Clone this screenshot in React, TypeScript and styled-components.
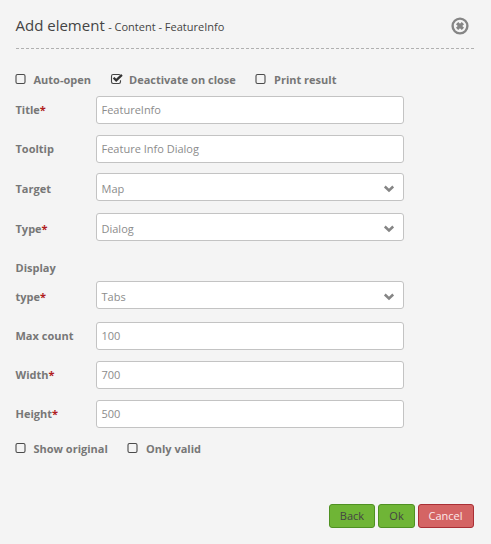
import React from "react";
import styled, { createGlobalStyle } from "styled-components";

const GlobalStyle = createGlobalStyle`
  body {
    margin: 0;
    background: #f4f4f4;
    font-family: "Open Sans", "Noto Sans", sans-serif;
    font-size: 11px;
    color: #777;
  }
`;

const Dialog = styled.div`
  box-sizing: border-box;
  width: 491px;
  height: 544px;
  padding: 0 17px 16px 15.5px;
  display: flex;
  flex-direction: column;
  background: #f4f4f4;
`;

const Header = styled.header`
  box-sizing: border-box;
  flex: none;
  height: 49px;
  padding: 4px 5px 0 0;
  display: flex;
  align-items: center;
  justify-content: space-between;
  border-bottom: 1px dashed #b0b0b0;
`;

const Heading = styled.h1`
  margin: 0;
  font-size: 15px;
  font-weight: 400;
  line-height: 22px;
  color: #444;
`;

const SubHeading = styled.span`
  margin-left: -0.5px;
  font-size: 11px;
`;

const CloseButton = styled.button`
  width: 18px;
  height: 18px;
  padding: 0;
  border: 0;
  background: none;
  svg {
    display: block;
  }
`;

const CheckRow = styled.div<{ $top: number }>`
  flex: none;
  display: flex;
  height: 16px;
  margin-top: ${(p) => p.$top}px;
`;

const CheckLabel = styled.label<{ $width: number }>`
  display: flex;
  width: ${(p) => p.$width}px;
  font-weight: 700;
  line-height: 16px;
  white-space: nowrap;
  svg {
    flex: none;
    margin: 1px 4.5px 0 -0.5px;
  }
  label + & svg {
    margin: 1px 5.1px 0 -1.1px;
  }
`;

const FieldRow = styled.div<{ $top: number }>`
  flex: none;
  display: flex;
  align-items: flex-end;
  margin-top: ${(p) => p.$top}px;
  height: 28px;
`;

const FieldLabel = styled.label<{ $drop: number }>`
  width: 80.5px;
  font-weight: 700;
  line-height: 29px;
  margin-bottom: ${(p) => -p.$drop}px;
`;

const Required = styled.span`
  color: #b01c20;
`;

const Control = styled.div<{ $drop: number }>`
  box-sizing: border-box;
  width: 308px;
  height: 28px;
  padding: ${(p) => p.$drop}px 8px 0 4.5px;
  display: flex;
  align-items: flex-start;
  justify-content: space-between;
  border: 1px solid #c3c3c3;
  border-radius: 3px;
  background: #fff;
  color: #8c8c8c;
  line-height: 25px;
  svg {
    margin-top: 9px;
  }
`;

const WrappedLine = styled.div`
  flex: none;
  height: 28px;
  margin-top: 12px;
  font-weight: 700;
  line-height: 29px;
`;

const Actions = styled.footer`
  margin-top: auto;
  display: flex;
  justify-content: flex-end;
  gap: 3px;
`;

const ActionButton = styled.button<{ $width: number; $danger?: boolean }>`
  box-sizing: border-box;
  width: ${(p) => p.$width}px;
  height: 24px;
  padding: 0 ${(p) => (p.$danger ? 1 : 0)}px 0 0;
  border: 1px solid ${(p) => (p.$danger ? "#a92f35" : "#4f9122")};
  border-radius: 3px;
  background: ${(p) => (p.$danger ? "#d46464" : "#6fb536")};
  color: ${(p) => (p.$danger ? "#fbe9e9" : "#444")};
  font: 11px/22px "Open Sans", "Noto Sans", sans-serif;
`;

const CloseIcon = () => (
  <svg width="18" height="18" viewBox="0 0 18 18">
    <circle cx="9" cy="9" r="7.4" fill="none" stroke="#858585" strokeWidth="2.4" />
    <path d="M6.1 6.1 11.9 11.9M11.9 6.1 6.1 11.9" stroke="#858585" strokeWidth="3.2" />
  </svg>
);

const CheckBox = ({ checked }: { checked?: boolean }) => (
  <svg width="14" height="12" viewBox="0 0 14 12">
    {checked ? (
      <>
        <path
          d="M10.5 7.2V8.8Q10.5 10.5 8.9 10.5H3.1Q1.5 10.5 1.5 8.8V3.2Q1.5 1.5 3.1 1.5H8.9L9.9 1.7"
          fill="none"
          stroke="#444"
          strokeWidth="1.1"
        />
        <path d="M3.6 4.8 6.2 7.4 11.9 1.9" fill="none" stroke="#333" strokeWidth="2.3" />
      </>
    ) : (
      <rect x="1" y="1.5" width="9" height="9" rx="1.5" fill="none" stroke="#4a4a4a" strokeWidth="1.1" />
    )}
  </svg>
);

const Chevron = () => (
  <svg width="12" height="8" viewBox="0 0 12 8">
    <path d="M1.8 1.5 6 5.5 10.2 1.5" fill="none" stroke="#858585" strokeWidth="2.5" />
  </svg>
);

type FieldProps = {
  label: string;
  value: string;
  top: number;
  required?: boolean;
  select?: boolean;
};

const Field = ({ label, value, top, required, select }: FieldProps) => {
  const drop = select ? 2 : 0;
  return (
    <FieldRow $top={top}>
      <FieldLabel $drop={drop}>
        {label}
        {required && <Required>*</Required>}
      </FieldLabel>
      <Control $drop={drop}>
        <span>{value}</span>
        {select && <Chevron />}
      </Control>
    </FieldRow>
  );
};

const App = () => (
  <>
    <GlobalStyle />
    <Dialog>
      <Header>
        <Heading>
          Add element <SubHeading>- Content - FeatureInfo</SubHeading>
        </Heading>
        <CloseButton aria-label="Close">
          <CloseIcon />
        </CloseButton>
      </Header>
      <CheckRow $top={23}>
        <CheckLabel $width={95.5}><CheckBox />Auto-open</CheckLabel>
        <CheckLabel $width={145}><CheckBox checked />Deactivate on close</CheckLabel>
        <CheckLabel $width={90}><CheckBox />Print result</CheckLabel>
      </CheckRow>
      <Field label="Title" value="FeatureInfo" top={8} required />
      <Field label="Tooltip" value="Feature Info Dialog" top={11} />
      <Field label="Target" value="Map" top={10} select />
      <Field label="Type" value="Dialog" top={12} required select />
      <WrappedLine>Display</WrappedLine>
      <Field label="type" value="Tabs" top={0} required select />
      <Field label="Max count" value="100" top={13} />
      <Field label="Width" value="700" top={11} required />
      <Field label="Height" value="500" top={11} required />
      <CheckRow $top={13}>
        <CheckLabel $width={112.5}><CheckBox />Show original</CheckLabel>
        <CheckLabel $width={90}><CheckBox />Only valid</CheckLabel>
      </CheckRow>
      <Actions>
        <ActionButton $width={46}>Back</ActionButton>
        <ActionButton $width={37}>Ok</ActionButton>
        <ActionButton $width={56} $danger>Cancel</ActionButton>
      </Actions>
    </Dialog>
  </>
);

export default App;
